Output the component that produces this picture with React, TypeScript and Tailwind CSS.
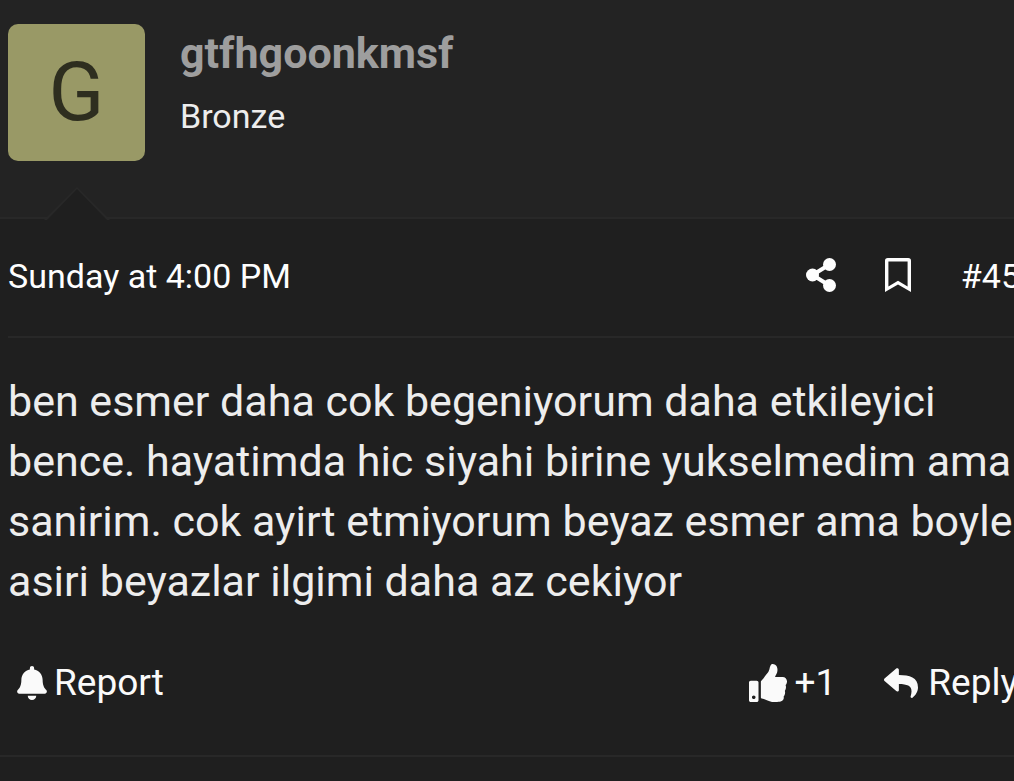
import { FaBell, FaReply, FaThumbsUp } from "react-icons/fa"

function ShareIcon() {
  return (
    <svg className="h-[34px] w-[30px]" viewBox="0 0 30 34" fill="currentColor" aria-hidden="true">
      <path d="M23.5 6.5 6.5 17 23.5 27.5" fill="none" stroke="currentColor" strokeWidth="4" />
      <circle cx="23.5" cy="6.5" r="6.5" />
      <circle cx="6.5" cy="17" r="6.5" />
      <circle cx="23.5" cy="27.5" r="6.5" />
    </svg>
  )
}

function BookmarkIcon() {
  return (
    <svg className="h-[34px] w-[26px]" viewBox="0 0 26 34" fill="currentColor" aria-hidden="true">
      <path
        fillRule="evenodd"
        d="M2.8 0H23.2A2.8 2.8 0 0 1 26 2.8V34L13 26.6 0 34V2.8A2.8 2.8 0 0 1 2.8 0ZM3.4 3.4V28.4L13 22.8 22.6 28.4V3.4Z"
      />
    </svg>
  )
}

function PostUser() {
  return (
    <header className="relative flex gap-[35px] border-b-2 border-[#282828] bg-[#232323] px-2 pt-6 pb-14">
      <a
        href="#user"
        aria-label="gtfhgoonkmsf"
        className="flex size-[137px] shrink-0 items-center justify-center rounded-[10px] bg-[#999966] pb-0.5 text-[82px] leading-none text-[#2e2e1f]"
      >
        G
      </a>
      <div className="flex flex-col">
        <h4 className="text-[43px] leading-[58px] font-bold text-[#9e9e9e]">
          <a href="#user">gtfhgoonkmsf</a>
        </h4>
        <h5 className="mt-[9px] text-[34px] leading-[50px] text-[#ededed]">Bronze</h5>
      </div>

      {/* arrow pointing up at the avatar */}
      <svg
        className="absolute -bottom-[3px] left-11 h-[34px] w-[66px]"
        viewBox="0 0 66 34"
        aria-hidden="true"
      >
        <path d="M0 34 33 1 66 34Z" fill="#282828" />
        <path d="M3 34 33 3 63 34Z" fill="#1f1f1f" />
      </svg>
    </header>
  )
}

function PostMeta() {
  return (
    <div className="ml-2 flex items-center justify-between border-b-2 border-[#282828] pt-8 pb-[35px] text-[34px] leading-[50px] text-[#fefefe]">
      <a href="#post">
        <time>Sunday at 4:00 PM</time>
      </a>
      <div className="-mr-1.5 flex items-center">
        <button type="button" aria-label="Share" className="pb-0.5">
          <ShareIcon />
        </button>
        <button type="button" aria-label="Add bookmark" className="ml-[49px] pb-0.5">
          <BookmarkIcon />
        </button>
        <a href="#post" className="ml-[50px]">#45</a>
      </div>
    </div>
  )
}

function PostActions() {
  return (
    <footer className="flex items-center justify-between px-2 text-[37px] leading-[52px] text-[#fafafa]">
      <button type="button" className="ml-[9px] flex items-center gap-[7px]">
        <FaBell className="h-[34px] w-[30px]" />
        Report
      </button>
      <div className="-mr-3 flex items-center gap-12">
        <button type="button" className="flex items-center gap-2">
          <FaThumbsUp className="size-[38px]" />
          +1
        </button>
        <button type="button" className="flex items-center gap-[10px]">
          <FaReply className="size-[34px]" />
          Reply
        </button>
      </div>
    </footer>
  )
}

export default function App() {
  return (
    <main className="min-h-screen overflow-x-hidden bg-[#1f1f1f] font-['Roboto',sans-serif]">
      <article className="border-b-2 border-[#282828] pb-[46px]">
        <PostUser />
        <PostMeta />
        <p className="mt-[33px] mb-[46px] pl-2 text-[43px] leading-[60px] text-[#ededed]">
          ben esmer daha cok begeniyorum daha etkileyici bence. hayatimda hic siyahi birine yukselmedim ama
          sanirim. cok ayirt etmiyorum beyaz esmer ama boyle asiri beyazlar ilgimi daha az cekiyor
        </p>
        <PostActions />
      </article>
    </main>
  )
}
